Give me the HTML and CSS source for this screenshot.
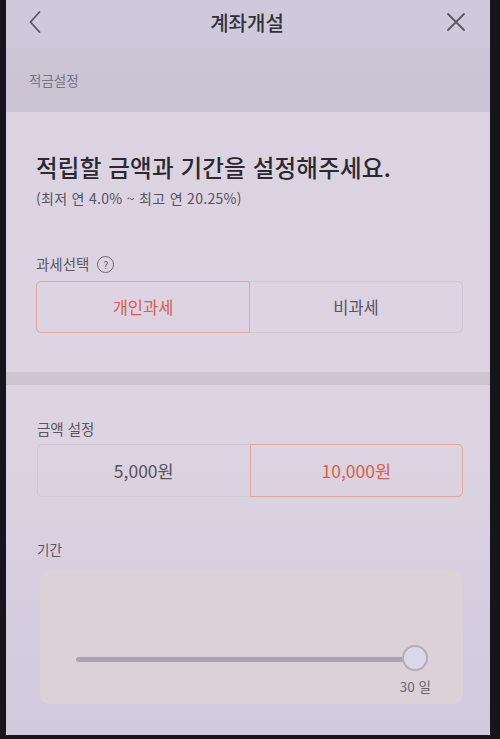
FILE: index.html
```html
<!DOCTYPE html>
<html lang="ko">
    <head>
        <meta charset="UTF-8" />
        <meta name="viewport" content="width=device-width, initial-scale=1.0" />
        <title>계좌개설</title>
        <link rel="stylesheet" href="styles.css">
    </head>
    <body>
        <div class="screen">
            <header class="top-bar">
                <button class="icon-btn" aria-label="뒤로">
                    <svg width="14" height="24" viewBox="0 0 14 24">
                        <path d="M11.5 2 L2.5 12 L11.5 22" fill="none" stroke="#5a5762" stroke-width="1.8" stroke-linecap="round" stroke-linejoin="round" />
                    </svg>
                </button>
                <h1 class="title">계좌개설</h1>
                <button class="icon-btn close" aria-label="닫기">
                    <svg width="20" height="20" viewBox="0 0 20 20">
                        <path d="M2 2 L18 18 M18 2 L2 18" fill="none" stroke="#5a5762" stroke-width="1.8" stroke-linecap="round" />
                    </svg>
                </button>
            </header>

            <div class="step-bar">적금설정</div>

            <section class="section">
                <h2 class="headline">적립할 금액과 기간을 설정해주세요.</h2>
                <p class="rate">(최저 연 4.0% ~ 최고 연 20.25%)</p>

                <div class="label tax-label">
                    과세선택
                    <span class="help">?</span>
                </div>
                <div class="segment">
                    <button class="seg-item active">개인과세</button>
                    <button class="seg-item">비과세</button>
                </div>
            </section>

            <div class="divider"></div>

            <section class="section section-amount">
                <div class="label">금액 설정</div>
                <div class="segment">
                    <button class="seg-item">5,000원</button>
                    <button class="seg-item active">10,000원</button>
                </div>

                <div class="label period-label">기간</div>
                <div class="slider-box">
                    <div class="track">
                        <div class="thumb"></div>
                        <span class="thumb-label">30 일</span>
                    </div>
                </div>
            </section>
        </div>
    </body>
</html>
```

FILE: styles.css
```css
body {
    margin: 0;
    background-color: #16151c;
    font-family: "Noto Sans CJK KR", "Noto Sans", sans-serif;
}

.screen {
    margin-left: 6px;
    width: 484px;
    height: 735px;
    background: linear-gradient(180deg, #dcd3e2 0%, #ddd3e2 60%, #cfcadd 100%);
    overflow: hidden;
}

.top-bar {
    height: 44px;
    padding: 0 24px 4px 22px;
    display: grid;
    grid-template-columns: 1fr auto 1fr;
    align-items: center;
    background-color: #cfcadb;
}

.icon-btn {
    padding: 0;
    border: none;
    background: none;
    display: flex;
}

.icon-btn.close {
    justify-self: end;
}

.title {
    margin: 0;
    font-size: 20px;
    font-weight: 500;
    color: #34313a;
}

.step-bar {
    height: 64px;
    padding-left: 23px;
    display: flex;
    align-items: center;
    font-size: 13.5px;
    color: #79747f;
    background: linear-gradient(180deg, #cbc5d6 0%, #c9c3d4 100%);
}

.section {
    padding: 38px 27px 39px 30px;
}

.headline {
    margin: 0;
    font-size: 23.5px;
    line-height: 34px;
    font-weight: 500;
    letter-spacing: 0.2px;
    color: #2b2930;
}

.rate {
    margin: 4px 0 0;
    font-size: 14px;
    line-height: 20px;
    letter-spacing: 0.3px;
    color: #56525b;
}

.label {
    font-size: 14.5px;
    line-height: 20px;
    color: #5a5660;
    display: flex;
    align-items: center;
    gap: 8px;
}

.tax-label {
    margin-top: 46px;
}

.help {
    width: 15px;
    height: 15px;
    border: 1.3px solid #6a6570;
    border-radius: 50%;
    font-size: 10px;
    line-height: 15px;
    text-align: center;
    color: #5a5660;
}

.segment {
    margin-top: 7px;
    display: flex;
    height: 52px;
}

.seg-item {
    flex: 1;
    position: relative;
    border: 1px solid #d2c8d1;
    background: none;
    font-family: inherit;
    font-size: 16.5px;
    color: #57535c;
}

.seg-item:first-child {
    border-radius: 5px 0 0 5px;
}

.seg-item:last-child {
    margin-left: -1px;
    border-radius: 0 5px 5px 0;
}

.seg-item.active {
    color: #d3614e;
    border-color: #e3a69a;
    z-index: 1;
}

.divider {
    height: 13px;
    background-color: #cdc5d2;
}

.section-amount {
    padding-top: 34px;
    padding-left: 31px;
}

.section-amount .segment {
    margin-top: 5px;
    height: 53px;
}

.section-amount .seg-item {
    font-size: 17.5px;
}

.period-label {
    margin-top: 42px;
    font-size: 13.5px;
}

.slider-box {
    margin: 12px 0 0 3px;
    height: 133px;
    padding: 86px 48px 0 36px;
    box-sizing: border-box;
    border-radius: 10px;
    background-color: #dcd1d6;
}

.track {
    position: relative;
    height: 5px;
    border-radius: 3px;
    background-color: #aaa3b4;
}

.thumb {
    position: absolute;
    right: -13px;
    top: -12px;
    width: 22px;
    height: 22px;
    border: 2px solid #b3adbe;
    border-radius: 50%;
    background-color: #dcd7e9;
}

.thumb-label {
    position: absolute;
    right: -16px;
    top: 19px;
    font-size: 13.5px;
    color: #69656e;
}
```
